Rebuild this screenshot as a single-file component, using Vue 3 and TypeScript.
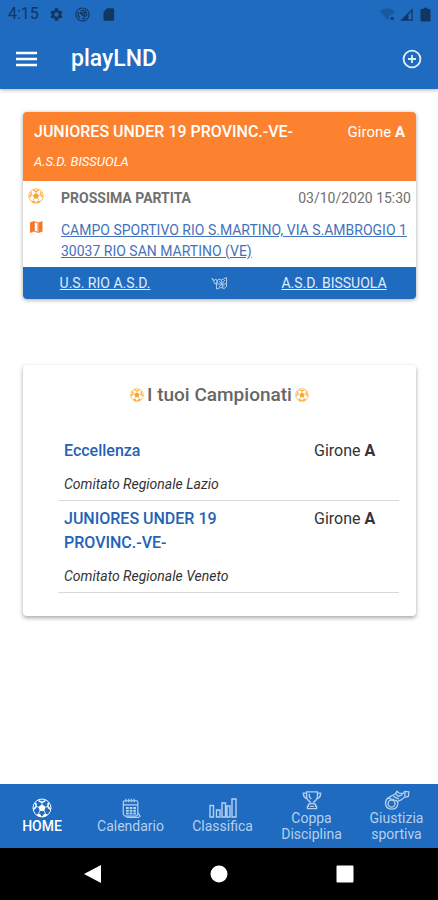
<script setup lang="ts">
interface League {
  name: string
  group: string
  committee: string
}

interface Tab {
  id: string
  label: string
}

const leagues: League[] = [
  { name: 'Eccellenza', group: 'A', committee: 'Comitato Regionale Lazio' },
  { name: 'JUNIORES UNDER 19 PROVINC.-VE-', group: 'A', committee: 'Comitato Regionale Veneto' },
]

const tabs: Tab[] = [
  { id: 'home', label: 'HOME' },
  { id: 'calendar', label: 'Calendario' },
  { id: 'ranking', label: 'Classifica' },
  { id: 'cup', label: 'Coppa Disciplina' },
  { id: 'justice', label: 'Giustizia sportiva' },
]
</script>

<template>
  <div class="screen">
    <svg class="sprite" width="0" height="0" aria-hidden="true">
      <symbol id="ball" viewBox="0 0 24 24">
        <circle cx="12" cy="12" r="10.8" fill="none" stroke="currentColor" stroke-width="1.2" />
        <path fill="currentColor" d="M12 7.600l4.300 3.100-1.600 5H9.300l-1.600-5zM7.800 2.200L12 4.200l4.200-2v1.900L12 6.200 7.800 4.100zM1.400 12.600l2.700-2.300-.6-4.700 2 .3.300 4.900-2.600 3.200zM22.600 12.600l-2.700-2.300.6-4.700-2 .3-.3 4.900 2.600 3.200zM5 19.700l4.500-.7 2.500 3.800-4.500-1zM19 19.700l-4.500-.7-2.500 3.800 4.500-1z" />
        <path fill="none" stroke="currentColor" d="M12 8V5M8 11l-3-1M16 11l3-1M9.500 15.500l-2 3.500M14.500 15.500l2 3.500" />
      </symbol>
    </svg>

    <header class="top">
      <div class="status">
        <span class="clock">4:15</span>
        <svg class="glyph" viewBox="0 0 24 24" aria-hidden="true">
          <path fill="currentColor" fill-rule="evenodd" d="M19.400 13a7.500 7.500 0 0 0 0-2l2.200-1.700-2.200-3.800-2.600 1a7.600 7.600 0 0 0-1.700-1L14.700 2H9.300l-.4 3.500a7.600 7.600 0 0 0-1.700 1l-2.600-1-2.200 3.800L4.600 11a7.500 7.500 0 0 0 0 2l-2.200 1.700 2.200 3.800 2.600-1a7.600 7.600 0 0 0 1.700 1l.4 3.500h5.400l.4-3.500a7.600 7.600 0 0 0 1.700-1l2.600 1 2.200-3.800zM12 15.500a3.500 3.500 0 1 1 0-7 3.500 3.500 0 0 1 0 7z" />
        </svg>
        <svg class="glyph ring" viewBox="0 0 24 24" aria-hidden="true">
          <g fill="none" stroke="currentColor" stroke-width="1.800">
            <circle cx="12" cy="12" r="10.500" />
            <path d="M8 17.500a6.800 6.800 0 0 1-1.500-9.500M9 5.900a6.800 6.800 0 0 1 9 9M16 17.500a6.800 6.800 0 0 1-5 1.200" />
            <path stroke-width="3" d="M8 8.500l8.500 7.500" />
            <path d="M11.500 8.500h4v4" />
          </g>
        </svg>
        <svg class="glyph" viewBox="0 0 24 24" aria-hidden="true">
          <path fill="currentColor" d="M19 2h-9L4 8v12c0 1.100.9 2 2 2h13c1.100 0 2-.9 2-2V4c0-1.100-.9-2-2-2z" />
        </svg>
        <span class="signals">
          <svg class="glyph" viewBox="0 0 24 24" aria-hidden="true">
            <path fill="currentColor" opacity=".35" d="M0 6.500C7 1 17 1 24 6.500L19 13h-5v5l-2 3z" />
            <path fill="currentColor" opacity=".8" d="M17 16h5v5h-5z" />
          </svg>
          <svg class="glyph" viewBox="0 0 24 24" aria-hidden="true">
            <path fill="currentColor" d="M2 22L22 2v20zM15 12v8h5V7z" fill-rule="evenodd" />
          </svg>
          <svg class="glyph battery" viewBox="0 0 24 24" aria-hidden="true">
            <path fill="currentColor" d="M9 1h6v2h3c1 0 2 1 2 2v16c0 1-1 2-2 2H6c-1 0-2-1-2-2V5c0-1 1-2 2-2h3z" />
          </svg>
        </span>
      </div>
      <div class="toolbar">
        <button class="icon-button" type="button" aria-label="Menu">
          <svg class="menu-icon" viewBox="0 0 21 16"><path fill="currentColor" d="M0 .8h21v2.400H0zM0 6.800h21v2.400H0zM0 12.800h21v2.400H0z" /></svg>
        </button>
        <h1>playLND</h1>
        <button class="icon-button" type="button" aria-label="Aggiungi">
          <svg class="add-icon" viewBox="0 0 20 20">
            <g fill="none" stroke="currentColor" stroke-width="1.800">
              <circle cx="10" cy="10" r="8.400" />
              <path d="M10 6v8M6 10h8" />
            </g>
          </svg>
        </button>
      </div>
    </header>

    <main>
      <section class="card match">
        <div class="match-head">
          <div class="match-title">
            <h2>JUNIORES UNDER 19 PROVINC.-VE-</h2>
            <span>Girone <b>A</b></span>
          </div>
          <em>A.S.D. BISSUOLA</em>
        </div>
        <div class="match-body">
          <svg class="ball-icon" aria-hidden="true"><use href="#ball" /></svg>
          <div class="match-when">
            <strong>PROSSIMA PARTITA</strong>
            <time datetime="2020-10-03T15:30">03/10/2020 15:30</time>
          </div>
          <svg class="map-icon" viewBox="0 0 14 14" aria-hidden="true">
            <path fill="currentColor" d="M1 2.500L5 1v10.500L1 13zM9.500 2.500l4-1.500v10.500l-4 1.500z" />
            <path fill="currentColor" fill-rule="evenodd" d="M5 1l4.500 1.500V13L5 11.500zM5.800 2.300v8.500l2.700.9V3.200z" />
          </svg>
          <a class="venue" href="#campo">CAMPO SPORTIVO RIO S.MARTINO, VIA S.AMBROGIO 1 30037 RIO SAN MARTINO (VE)</a>
        </div>
        <div class="teams">
          <a href="#rio">U.S. RIO A.S.D.</a>
          <svg class="versus" viewBox="0 0 18 14" aria-hidden="true">
            <g fill="none" stroke="currentColor">
              <path d="M1 2l2 2.500L5 3l1.500 3.500L4 8zM5.500 7l2-4 3 1 5-2.500v9l-2 2-4-1-4 1.500z" />
              <path d="M8 5l5.500 6M14 4l-6 7M10.500 4l1 8M6 8h9" />
            </g>
          </svg>
          <a href="#bissuola">A.S.D. BISSUOLA</a>
        </div>
      </section>

      <section class="card leagues">
        <h2>
          <svg class="title-ball" aria-hidden="true"><use href="#ball" /></svg>
          <span>I tuoi Campionati</span>
          <svg class="title-ball" aria-hidden="true"><use href="#ball" /></svg>
        </h2>
        <ul>
          <li v-for="league in leagues" :key="league.name">
            <div class="league-row">
              <a href="#campionato">{{ league.name }}</a>
              <span>Girone <b>{{ league.group }}</b></span>
            </div>
            <em>{{ league.committee }}</em>
          </li>
        </ul>
      </section>
    </main>

    <nav class="tabs" aria-label="Sezioni">
      <button v-for="tab in tabs" :key="tab.id" type="button" :class="{ active: tab.id === 'home' }">
        <svg v-if="tab.id === 'home'" class="tab-icon" viewBox="0 0 24 24"><use href="#ball" /></svg>
        <svg v-else-if="tab.id === 'calendar'" class="tab-icon" viewBox="0 0 22 22">
          <g fill="none" stroke="currentColor">
            <path stroke-width="1.300" d="M4 3h13q1.500 0 1.500 1.500V18l-1.500 2H4.500L2.500 18V4.500Q2.500 3 4 3zM3 7.500h15M5.500 .8v4M8.500 .8v4M11.500 .8v4M14.500 .8v4M18.500 16l2.500 4-2 1.500H6" />
            <path stroke-width="2.200" d="M5.500 11h3M9.500 11h3M13.500 11h3M5.500 14h3M9.500 14h3M13.500 14h3M5.500 17h3M9.500 17h3M13.500 17h3" />
          </g>
        </svg>
        <svg v-else-if="tab.id === 'ranking'" class="tab-icon chart" viewBox="0 0 28 20">
          <path fill="none" stroke="currentColor" stroke-width="1.400" d="M1 19V7.500h3.500V19zM7.500 19v-7H11v7zM13 19V5h3.500v14zM18 19V8h3v11zM23 19V1h4v18z" />
        </svg>
        <svg v-else-if="tab.id === 'cup'" class="tab-icon" viewBox="0 0 22 22">
          <path fill="none" stroke="currentColor" stroke-width="1.500" d="M5 2h12v5c0 3-2 5-4 6v2l2 1v2h1v2.500H6V18h1v-2l2-1v-2c-2-1-4-3-4-6zM5 3.500H1.500C1.500 7 3 9 6 10M17 3.500h3.500C20.500 7 19 9 16 10M8 4v3l2 3M9 18h4M9 15h4" />
        </svg>
        <svg v-else class="tab-icon whistle" viewBox="0 0 28 22">
          <g fill="none" stroke="currentColor" stroke-width="1.500">
            <path d="M14.500 12.500l4-1.500 3.500-3 4.500-1 .5-5-4.500-.5-2 2.500-4-.5-2.500-2-2 3-6 3C3 9 1 12 1.500 15.500 2 19 5 21 8.500 21c5 0 7.500-4 6-8.500z" />
            <circle cx="8" cy="15" r="3.800" />
            <path d="M4 9l10 3M10 7l6 3M12.500 4l3 3 4.500-2M23 2.500l-.5 4.500" />
          </g>
        </svg>
        <span>{{ tab.label }}</span>
      </button>
    </nav>

    <footer class="system">
      <button type="button" aria-label="Indietro"><svg viewBox="0 0 18 18"><path fill="currentColor" d="M0 9L17 0v18z" /></svg></button>
      <button type="button" aria-label="Schermata iniziale"><svg viewBox="0 0 18 18"><circle cx="9" cy="9" r="8.500" fill="currentColor" /></svg></button>
      <button type="button" aria-label="App recenti"><svg viewBox="0 0 18 18"><rect width="17" height="17" x=".5" y=".5" rx="1" fill="currentColor" /></svg></button>
    </footer>
  </div>
</template>

<style>
body {
  margin: 0;
  background: #fff;
}
</style>

<style scoped>
.screen {
  display: flex;
  flex-direction: column;
  min-height: 100vh;
  font-family: Roboto, "Liberation Sans", sans-serif;
  font-size: 14px;
  line-height: 20px;
  color: #333;
}

.sprite {
  position: absolute;
}

button {
  display: flex;
  padding: 0;
  border: 0;
  background: none;
  color: inherit;
  font: inherit;
}

h1,
h2,
ul {
  margin: 0;
  padding: 0;
}

.top {
  background: #1e6bc0;
  color: #fff;
  box-shadow: 0 1px 4px rgba(0, 0, 0, 0.3);
}

.status {
  display: flex;
  align-items: center;
  gap: 10px;
  height: 28px;
  padding: 0 8px;
  color: #12365f;
}

.clock {
  font-size: 16px;
}

.glyph {
  width: 15px;
  height: 15px;
}

.ring {
  margin: 0 1px;
}

.signals {
  display: flex;
  gap: 4px;
  margin-left: auto;
}

.battery {
  margin-right: -3px;
}

.toolbar {
  display: flex;
  align-items: center;
  height: 61px;
  padding: 0 16px;
}

.menu-icon {
  width: 21px;
  height: 16px;
}

.add-icon {
  width: 20px;
  height: 20px;
  color: #e2edf9;
}

h1 {
  flex: 1;
  margin-left: 34px;
  font-size: 23px;
  font-weight: 500;
  line-height: 28px;
}

main {
  flex: 1;
  display: flex;
  flex-direction: column;
  gap: 66px;
  padding: 23px 22px 24px 23px;
}

.card {
  overflow: hidden;
  border-radius: 4px;
  background: #fff;
  box-shadow: 0 1px 4px rgba(0, 0, 0, 0.35);
}

.match-head {
  padding: 10px 11px 9px;
  background: #fd8230;
  color: #fff;
}

.match-title {
  display: flex;
  justify-content: space-between;
  margin-bottom: 10px;
  font-size: 15px;
}

.match-title h2 {
  font-size: 16px;
  font-weight: 500;
  line-height: 20px;
}

.match-head em {
  display: block;
  font-size: 13px;
}

.match-body {
  display: grid;
  grid-template-columns: 16px 1fr;
  column-gap: 17px;
  row-gap: 12px;
  padding: 7px 5px 5px;
}

.ball-icon {
  width: 16px;
  height: 16px;
  color: #fba526;
}

.map-icon {
  width: 14px;
  height: 14px;
  margin-left: 1px;
  color: #f4772b;
}

.match-when {
  display: flex;
  justify-content: space-between;
  color: #707070;
}

.match-when strong {
  font-weight: 700;
}

.venue {
  color: #4472bd;
  line-height: 21px;
}

.teams {
  display: grid;
  grid-template-columns: 164px 1fr 164px;
  align-items: center;
  justify-items: center;
  padding: 6px 0;
  background: #1e6bc0;
  color: #e2edf9;
}

.teams a {
  color: inherit;
}

.versus {
  width: 18px;
  height: 14px;
  color: #a9caed;
}

.leagues {
  padding: 18px 17px 23px 35px;
  box-shadow: 0 2px 4px rgba(0, 0, 0, 0.35);
}

.leagues h2 {
  display: flex;
  align-items: center;
  justify-content: center;
  gap: 3px;
  margin: 0 18px 32px 0;
  color: #666;
  font-size: 19px;
  font-weight: 500;
  line-height: 24px;
}

.title-ball {
  width: 14px;
  height: 14px;
  color: #fba526;
}

li {
  list-style: none;
  padding: 0 0 6px 6px;
  border-bottom: 1px solid #d8d8d8;
}

li + li {
  padding-top: 6px;
}

.league-row {
  display: grid;
  grid-template-columns: 250fr 85fr;
  margin-bottom: 11px;
  font-size: 16px;
  line-height: 24px;
}

.league-row a {
  max-width: 180px;
  color: #2462b5;
  font-weight: 500;
  text-decoration: none;
}

li em {
  display: block;
}

.tabs {
  display: grid;
  grid-template-columns: 84fr 93fr 91fr 87fr 83fr;
  min-height: 64px;
  background: #1e6bc0;
  color: #b5d0ef;
}

.tabs button {
  flex-direction: column;
  align-items: center;
  justify-content: center;
  line-height: 16px;
}

.tabs button.active {
  color: #fff;
  font-weight: 500;
}

.tabs span {
  max-width: 72px;
}

.tab-icon {
  width: 22px;
  height: 20px;
}

.chart,
.whistle {
  width: 28px;
}

.system {
  display: flex;
  align-items: center;
  justify-content: center;
  gap: 108px;
  height: 52px;
  background: #000;
  color: #fff;
}

.system svg {
  width: 18px;
  height: 18px;
}
</style>
